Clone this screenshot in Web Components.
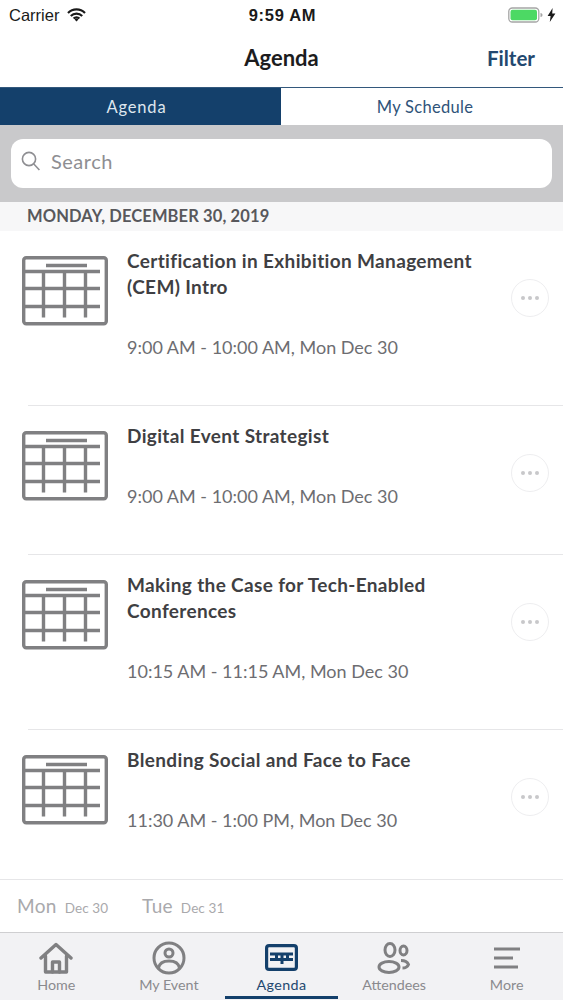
<!DOCTYPE html>
<html>
<head>
<meta charset="utf-8">
<title>Agenda</title>
<style>
  html, body { margin: 0; padding: 0; background: #fff; }
  body { font-family: Lato, "Open Sans", sans-serif; width: 563px; height: 1000px; overflow: hidden; }
  agenda-app { width: 563px; height: 1000px; }
</style>
</head>
<body>
<agenda-app></agenda-app>

<script>
// calendar glyph shared by the list rows
const CAL_ICON = `
  <svg width="86" height="70" viewBox="0 0 86 70" fill="none" stroke="#808082" stroke-width="3.4">
    <rect x="1.7" y="1.7" width="82.6" height="66" rx="2.5"/>
    <path d="M24 9.5h41"/>
    <path d="M3 15.5h75M3 32.5h75M3 50.5h75"/>
    <path d="M21.5 15.5v46M42.5 15.5v46M63.5 15.5v46"/>
  </svg>`;

class StatusBar extends HTMLElement {
  connectedCallback() {
    const shadow = this.attachShadow({ mode: 'open' });
    shadow.innerHTML = `
      <style>
        :host { display: grid; grid-template-columns: 1fr auto 1fr; align-items: center; height: 30px; padding: 0 7px 0 9px; color: #1a1a1a; font: 16.5px "Liberation Sans", sans-serif; }
        .left { display: flex; align-items: center; gap: 8px; }
        .time { font-weight: 700; font-size: 16.5px; letter-spacing: .7px; }
        .right { display: flex; justify-content: flex-end; align-items: center; gap: 3px; }
        svg { display: block; }
      </style>
      <div class="left">
        <span>Carrier</span>
        <svg width="19" height="14" viewBox="0 0 19 14"><path d="M1 5a12 12 0 0 1 17 0M3.8 8a8 8 0 0 1 11.4 0M6.6 10.6a4 4 0 0 1 5.8 0" fill="none" stroke="#1a1a1a" stroke-width="2.2"/><path d="M7.6 11.4a2.6 2.6 0 0 1 3.8 0L9.5 13.6z" fill="#1a1a1a"/></svg>
      </div>
      <span class="time">9:59 AM</span>
      <div class="right">
        <svg width="36" height="16" viewBox="0 0 36 16"><rect x="0.8" y="1" width="30" height="14" rx="3.5" fill="none" stroke="#a5a5a5" stroke-width="1.3"/><rect x="2.5" y="2.8" width="26.5" height="10.4" rx="2" fill="#4cd964"/><path d="M32.5 6v4c1.4 0 2-1 2-2s-.6-2-2-2z" fill="#a5a5a5"/></svg>
        <svg width="9" height="14" viewBox="0 0 9 14"><path d="M5.6 0 .6 8h3L2.8 14 8.4 5.6h-3.2z" fill="#1a1a1a"/></svg>
      </div>`;
  }
}
customElements.define('status-bar', StatusBar);

class NavBar extends HTMLElement {
  connectedCallback() {
    const shadow = this.attachShadow({ mode: 'open' });
    shadow.innerHTML = `
      <style>
        :host { display: grid; grid-template-columns: 1fr auto 1fr; align-items: center; height: 57px; box-sizing: border-box; padding-bottom: 2px; }
        .title { font-size: 22px; font-weight: 700; color: #1c1c1e; }
        .action { justify-self: end; margin-right: 28px; font-size: 20.5px; font-weight: 700; color: #23486f; }
      </style>
      <span></span>
      <span class="title"><slot></slot></span>
      <span class="action">${this.getAttribute('action') || ''}</span>`;
  }
}
customElements.define('nav-bar', NavBar);

class SegmentTabs extends HTMLElement {
  connectedCallback() {
    const shadow = this.attachShadow({ mode: 'open' });
    shadow.innerHTML = `
      <style>
        :host { display: grid; grid-template-columns: 281px 1fr; height: 38px; border-top: 1px solid #33587c; box-sizing: border-box; font-size: 16.5px; }
        div { display: flex; align-items: center; justify-content: center; letter-spacing: .3px; box-sizing: border-box; }
        .on { background: #14406b; color: #dfe6ee; padding-right: 8px; letter-spacing: .8px; }
        .off { background: #fff; color: #2f5379; padding-left: 6px; }
      </style>
      <div class="on">Agenda</div>
      <div class="off">My Schedule</div>`;
  }
}
customElements.define('segment-tabs', SegmentTabs);

class SearchPanel extends HTMLElement {
  connectedCallback() {
    const shadow = this.attachShadow({ mode: 'open' });
    shadow.innerHTML = `
      <style>
        :host { display: block; background: #c9c9cb; padding: 14px 11px; height: 77px; box-sizing: border-box; }
        .box { display: flex; align-items: center; gap: 10px; height: 49px; background: #fff; border-radius: 12px; padding: 0 0 6px 10px; box-sizing: border-box; color: #8e8e92; font-size: 20px; letter-spacing: .5px; }
        svg { display: block; }
      </style>
      <div class="box">
        <svg width="20" height="20" viewBox="0 0 20 20" fill="none" stroke="#8e8e92" stroke-width="1.6"><circle cx="8" cy="8" r="6.6"/><path d="M12.8 13l5.6 6"/></svg>
        <span>Search</span>
      </div>`;
  }
}
customElements.define('search-panel', SearchPanel);

class DateHeader extends HTMLElement {
  connectedCallback() {
    const shadow = this.attachShadow({ mode: 'open' });
    shadow.innerHTML = `
      <style>
        :host { display: flex; align-items: center; height: 29px; box-sizing: border-box; padding: 0 0 1px 27px; background: #f7f7f8; color: #58585c; font-size: 16.5px; font-weight: 700; letter-spacing: .12px; }
      </style>
      <slot></slot>`;
  }
}
customElements.define('date-header', DateHeader);

class AgendaItem extends HTMLElement {
  connectedCallback() {
    const shadow = this.attachShadow({ mode: 'open' });
    shadow.innerHTML = `
      <style>
        :host { display: grid; grid-template-columns: 105px 1fr 52px; box-sizing: border-box; padding: 17px 14px 0 22px; height: var(--row-h, 150px); position: relative; }
        :host::after { content: ""; position: absolute; left: 28px; right: 0; bottom: 0; height: 1px; background: #e6e6e8; }
        .ico { padding-top: 8px; }
        svg { display: block; }
        .title { font-size: 19px; font-weight: 700; line-height: 26px; color: #3f3f43; letter-spacing: .35px; }
        .when { margin-top: 35px; font-size: 18px; line-height: 24px; color: #6d6d71; }
        .more { align-self: start; justify-self: end; margin-top: 31px; width: 38px; height: 38px; box-sizing: border-box; border: 1px solid #eeeef0; border-radius: 50%; display: flex; align-items: center; justify-content: center; gap: 3px; }
        .more i { width: 4px; height: 4px; background: #c8c8ca; border-radius: 50%; }
      </style>
      <div class="ico">${CAL_ICON}</div>
      <div>
        <div class="title"><slot></slot></div>
        <div class="when">${this.getAttribute('when') || ''}</div>
      </div>
      <div class="more"><i></i><i></i><i></i></div>`;
  }
}
customElements.define('agenda-item', AgendaItem);

class DayStrip extends HTMLElement {
  connectedCallback() {
    const shadow = this.attachShadow({ mode: 'open' });
    shadow.innerHTML = `
      <style>
        :host { display: flex; align-items: center; gap: 34px; height: 52px; padding: 0 0 2px 17px; box-sizing: border-box; background: #fff; color: #a9a9ac; }
        span { display: flex; align-items: baseline; gap: 8px; font-size: 19px; letter-spacing: .3px; }
        small { font-size: 13.5px; letter-spacing: .1px; }
      </style>
      <span>Mon <small>Dec 30</small></span>
      <span>Tue <small>Dec 31</small></span>`;
  }
}
customElements.define('day-strip', DayStrip);

class TabItem extends HTMLElement {
  connectedCallback() {
    const shadow = this.attachShadow({ mode: 'open' });
    shadow.innerHTML = `
      <style>
        :host { display: flex; flex-direction: column; align-items: center; flex: 1; position: relative; color: #8a8a8e; font-size: 14.3px; height: 100%; box-sizing: border-box; padding-top: 6px; }
        :host([active]) { color: #23486f; letter-spacing: .4px; }
        :host([active])::after { content: ""; position: absolute; left: 0; right: 0; bottom: 1px; height: 3px; background: #14406b; }
        .ico { height: 37px; display: flex; align-items: center; justify-content: center; }
        svg { display: block; }
      </style>
      <div class="ico"><slot name="icon"></slot></div>
      <span>${this.getAttribute('label')}</span>`;
  }
}
customElements.define('tab-item', TabItem);

class AgendaApp extends HTMLElement {
  connectedCallback() {
    const shadow = this.attachShadow({ mode: 'open' });
    shadow.innerHTML = `
      <style>
        :host { display: flex; flex-direction: column; background: #fff; font-family: Lato, "Open Sans", sans-serif; }
        .list { flex: 1; overflow: hidden; border-bottom: 1px solid #e6e6e8; }
        .tabs { display: flex; height: 68px; background: #f2f2f4; border-top: 1px solid #cfcfd1; box-sizing: border-box; }
        .tabs tab-item { flex: 0 0 112.6px; }
      </style>
      <status-bar></status-bar>
      <nav-bar action="Filter">Agenda</nav-bar>
      <segment-tabs></segment-tabs>
      <search-panel></search-panel>
      <date-header>MONDAY, DECEMBER 30, 2019</date-header>
      <div class="list">
        <agenda-item style="--row-h:175px" when="9:00 AM - 10:00 AM, Mon Dec 30">Certification in Exhibition Management (CEM) Intro</agenda-item>
        <agenda-item style="--row-h:149px" when="9:00 AM - 10:00 AM, Mon Dec 30">Digital Event Strategist</agenda-item>
        <agenda-item style="--row-h:175px" when="10:15 AM - 11:15 AM, Mon Dec 30">Making the Case for Tech-Enabled Conferences</agenda-item>
        <agenda-item style="--row-h:150px" when="11:30 AM - 1:00 PM, Mon Dec 30">Blending Social and Face to Face</agenda-item>
      </div>
      <day-strip></day-strip>
      <div class="tabs">
        <tab-item label="Home">
          <svg slot="icon" width="34" height="32" viewBox="0 0 34 32" fill="none" stroke="#808082" stroke-width="3.4" stroke-linejoin="round" stroke-linecap="round"><path d="M2 16 17 2.5 32 16"/><path d="M6.5 14v16h21V14"/><path d="M13.5 30V20h7v10"/></svg>
        </tab-item>
        <tab-item label="My Event">
          <svg slot="icon" width="34" height="34" viewBox="0 0 34 34" fill="none" stroke="#808082" stroke-width="3"><circle cx="17" cy="17" r="15"/><circle cx="17" cy="12" r="4"/><path d="M6.5 27c1-5.500 5.500-7 10.500-7s9.500 1.500 10.500 7"/></svg>
        </tab-item>
        <tab-item label="Agenda" active>
          <svg slot="icon" width="33" height="27" viewBox="0 0 33 27" fill="none" stroke="#14406b" stroke-width="3.2"><rect x="1.6" y="1.6" width="29.8" height="23.8" rx="2.5"/><path d="M5 10h23M5 15.5h23M11.5 10v7M17 10v10M22.5 10v7" stroke-width="3"/></svg>
        </tab-item>
        <tab-item label="Attendees">
          <svg slot="icon" width="34" height="32" viewBox="0 0 34 32" fill="none" stroke="#808082" stroke-width="3"><ellipse cx="13" cy="8" rx="5" ry="6.5"/><ellipse cx="26.5" cy="8.5" rx="3.5" ry="4.5"/><ellipse cx="12" cy="25" rx="10" ry="5.5"/><path d="M24 18.5c3.500 0 6.500 1.500 7.500 4-1 2.500-3.500 3.500-6 3.500"/></svg>
        </tab-item>
        <tab-item label="More">
          <svg slot="icon" width="28" height="22" viewBox="0 0 28 22" fill="none" stroke="#808082" stroke-width="3"><path d="M1 2h26M1 11h19M1 20h24"/></svg>
        </tab-item>
      </div>`;
  }
}
customElements.define('agenda-app', AgendaApp);
</script>
</body>
</html>
